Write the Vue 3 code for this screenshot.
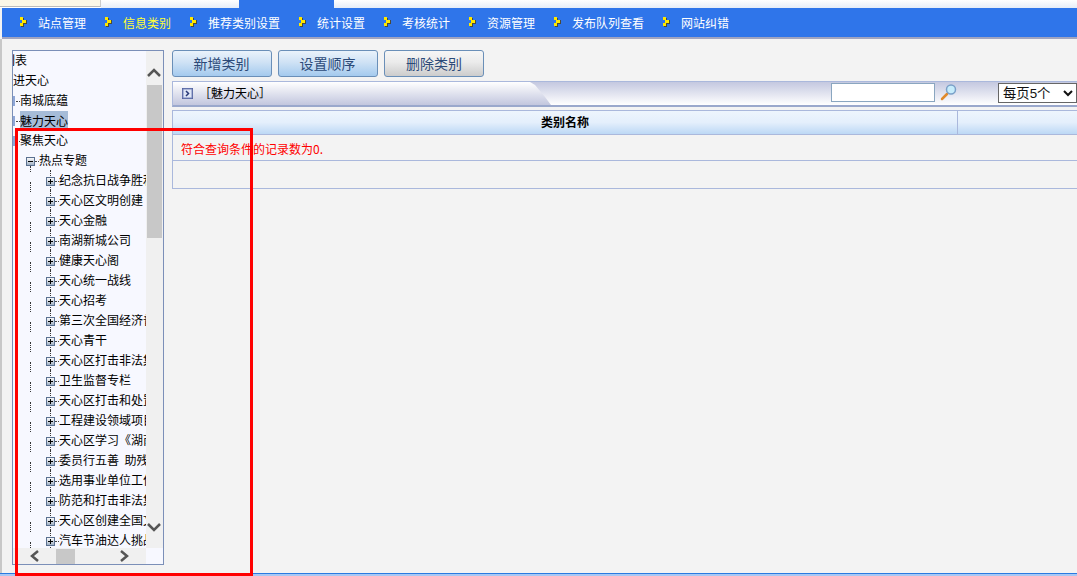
<script setup>
const navItems = ['站点管理', '信息类别', '推荐类别设置', '统计设置', '考核统计', '资源管理', '发布队列查看', '网站纠错']
const roots = [
  { text: '列表', cls: 'lv0 first' },
  { text: '推进天心', cls: 'lv0 second' },
  { text: '南城底蕴', cls: 'lv1' },
  { text: '魅力天心', cls: 'lv1 sel' },
  { text: '聚焦天心', cls: 'lv1' },
]
const children = ['纪念抗日战争胜利70周年', '天心区文明创建', '天心金融', '南湖新城公司', '健康天心阁', '天心统一战线', '天心招考', '第三次全国经济普查', '天心青干', '天心区打击非法集资', '卫生监督专栏', '天心区打击和处置非法', '工程建设领域项目', '天心区学习《湖南日报》', '委员行五善  助残', '选用事业单位工作人员', '防范和打击非法集资', '天心区创建全国文明', '汽车节油达人挑战']
</script>

<template>
  <div class="page">
    <div class="topband">
      <div class="cream"></div>
      <div class="pale"></div>
      <div class="tabblue"></div>
      <div class="pale grow"></div>
    </div>
    <nav class="nav">
      <div v-for="(n, i) in navItems" :key="n" class="navitem" :class="{ on: i === 1 }">
        <svg width="8" height="10" viewBox="0 0 8 10"><path d="M1 1h3v2h3v4H4v3H1V7h2V3H1z" fill="#4a4a3a"/><path d="M0 0h3v3h3v3H3v3H0V6h2V3H0z" fill="#ffe800"/></svg>
        <span>{{ n }}</span>
      </div>
    </nav>
    <div class="body">
      <aside class="panel">
        <div class="panel-main">
          <div class="tree">
            <div v-for="r in roots" :key="r.text" class="row" :class="r.cls">
              <i class="stub"></i><span class="label">{{ r.text }}</span>
            </div>
            <div class="row lv2">
              <i class="box minus"></i><i class="dots"></i><span class="label">热点专题</span>
            </div>
            <div v-for="c in children" :key="c" class="row lv3">
              <i class="guide"></i><i class="vline"></i>
              <i class="box plus"></i><i class="dots"></i><span class="label">{{ c }}</span>
            </div>
          </div>
          <div class="vscroll">
            <svg class="chev-up" width="14" height="9" viewBox="0 0 14 9"><path d="M1 8l6-6 6 6" fill="none" stroke="#555" stroke-width="2.500"/></svg>
            <div class="vthumb"></div>
            <div class="grow"></div>
            <svg class="chev-down" width="14" height="9" viewBox="0 0 14 9"><path d="M1 1l6 6 6-6" fill="none" stroke="#555" stroke-width="2.500"/></svg>
          </div>
        </div>
        <div class="hscroll">
          <svg width="9" height="12" viewBox="0 0 9 12"><path d="M8 1L2 6l6 5" fill="none" stroke="#555" stroke-width="2.500"/></svg>
          <div class="hthumb"></div>
          <svg class="hright" width="9" height="12" viewBox="0 0 9 12"><path d="M1 1l6 5-6 5" fill="none" stroke="#555" stroke-width="2.500"/></svg>
        </div>
      </aside>
      <main class="main">
        <div class="toolbar">
          <button class="btn">新增类别</button>
          <button class="btn">设置顺序</button>
          <button class="btn gray">删除类别</button>
        </div>
        <div class="titlebar">
          <div class="tab">
            <svg width="11" height="11" viewBox="0 0 11 11"><rect x=".5" y=".5" width="10" height="10" fill="#dfe6f6" stroke="#4a5a98"/><rect x="1" y="1" width="9" height="9" fill="none" stroke="#7a88bc"/><path d="M4 3l2.500 2.500L4 8" fill="none" stroke="#2a3a78" stroke-width="1.500"/></svg>
            <span class="title">［魅力天心］</span>
          </div>
          <div class="tools">
            <input class="search" type="text" />
            <svg class="lens" width="18" height="18" viewBox="0 0 18 18"><path d="M2 16l5-5" stroke="#e08a2c" stroke-width="2.500" stroke-linecap="round"/><circle cx="11" cy="6.500" r="4.500" fill="#c6ecfb" stroke="#7aa0c8" stroke-width="1.500"/></svg>
            <select class="pagesize"><option>每页5个</option></select>
          </div>
        </div>
        <div class="thead">
          <div class="th">类别名称</div>
          <div class="th"></div>
        </div>
        <div class="msg">符合查询条件的记录数为0.</div>
        <div class="empty"></div>
      </main>
    </div>
    <div class="bottomline"></div>
    <div class="annotation"></div>
  </div>
</template>

<style>
html, body { margin: 0; background: #f3f3f3; overflow: hidden; }
</style>

<style scoped>
.page {
  position: relative;
  width: 1077px;
  height: 576px;
  overflow: hidden;
  display: flex;
  flex-direction: column;
  background: #f3f3f3;
  font: 12px "Noto Sans CJK SC", "Liberation Sans", sans-serif;
  color: #000;
  box-sizing: border-box;
}
.topband { height: 8px; display: flex; flex: none; background: #fff; }
.cream { width: 101px; height: 7px; background: #fbf7e8; border-right: 1px solid #ccc; border-bottom: 1px solid #bbb; box-sizing: border-box; }
.pale { width: 138px; background: linear-gradient(#ffffff, #e6edf8); }
.tabblue { width: 95px; background: #2f75ea; }
.grow { flex: 1; }
.nav {
  flex: none;
  height: 29px;
  margin-left: 2px;
  padding-left: 18px;
  background: #2f75ea;
  border-bottom: 2px solid #a0a4c0;
  display: flex;
  align-items: center;
  gap: 19px;
  color: #fff;
}
.navitem { display: flex; align-items: center; gap: 10px; line-height: 26px; }
.navitem.on { color: #ffff33; }
.navitem svg { margin-top: -1px; }
.body {
  flex: 1;
  min-height: 0;
  display: flex;
  gap: 8px;
  padding: 11px 0 8px 10px;
  border-left: 2px solid #c8c8c8;
  box-sizing: border-box;
}
.panel {
  width: 152px;
  flex: none;
  height: 515px;
  box-sizing: border-box;
  border: 1px solid #7b8fb8;
  background: #f7f8ff;
  display: flex;
  flex-direction: column;
}
.panel-main { flex: 1; min-height: 0; display: flex; }
.tree { width: 133px; flex: none; overflow: hidden; margin-top: -1px; }
.row {
  position: relative;
  height: 20px;
  display: flex;
  align-items: center;
  white-space: pre;
  line-height: 18px;
}
.stub { position: absolute; left: 0; top: 6px; width: 2px; height: 10px; background: #8ea6d6; }
.lv0 .stub { display: none; }
.first .label { margin-left: -10px; }
.second .label { margin-left: -12px; }
.lv1 { padding-left: 7px; }
.lv1::before { content: ""; position: absolute; left: 3px; top: 11px; width: 4px; border-top: 1px dotted #444; }
.sel .label { background: #a6bcd8; line-height: 19px; }
.lv2 { padding-left: 13px; }
.lv3 { padding-left: 33px; }
.box {
  width: 9px;
  height: 9px;
  flex: none;
  box-sizing: border-box;
  border: 1px solid #5a7090;
  background: linear-gradient(#fafafa, #a0b0c4);
  position: relative;
  margin-top: 2px;
}
.box::before { content: ""; position: absolute; left: 1px; right: 1px; top: 3px; height: 1px; background: #000; }
.plus::after { content: ""; position: absolute; top: 1px; bottom: 1px; left: 3px; width: 1px; background: #000; }
.dots { width: 4px; flex: none; border-top: 1px dotted #444; margin-top: 2px; }
.guide { position: absolute; left: 17px; top: 12px; height: 10px; border-left: 1px dotted #333; }
.vline { position: absolute; left: 37px; top: 0; height: 100%; border-left: 1px dotted #333; }
.lv3 .box { z-index: 1; }
.lv2::after { content: ""; position: absolute; left: 17px; top: 16px; height: 6px; border-left: 1px dotted #333; }
.vscroll {
  width: 17px;
  flex: none;
  background: #f0f0f0;
  display: flex;
  flex-direction: column;
  align-items: flex-start;
}
.chev-up { margin: 17px 0 0 1px; flex: none; }
.vthumb { width: 15px; height: 153px; background: #c8c8c8; margin: 8px 0 0 1px; flex: none; }
.chev-down { margin: 0 0 16px 1px; flex: none; }
.hscroll {
  height: 16px;
  flex: none;
  background: #f0f0f0;
  display: flex;
  align-items: center;
  padding-left: 17px;
  margin-right: 17px;
}
.hthumb { width: 19px; height: 15px; background: #c8c8c8; margin-left: 17px; }
.hright { margin-left: 45px; }
.main { width: 930px; flex: none; display: flex; flex-direction: column; }
.toolbar { display: flex; gap: 6px; height: 27px; flex: none; }
.btn {
  width: 100px;
  height: 27px;
  padding: 0 1px 2px 0;
  border: 1px solid #6a8fb8;
  border-radius: 3px;
  background: linear-gradient(#eaf3fb 0%, #cfe2f5 45%, #a4caee 100%);
  color: #2c4a78;
  font: 14px "Noto Sans CJK SC", "Liberation Sans", sans-serif;
}
.btn.gray { background: linear-gradient(#f6f6f6 0%, #ebebeb 45%, #cccccc 100%); padding-right: 0; }
.titlebar {
  position: relative;
  margin-top: 4px;
  height: 26px;
  flex: none;
  box-sizing: border-box;
  border-top: 1px solid #aab8dc;
  border-bottom: 2px solid #9aa8cc;
  border-left: 1px solid #aab8dc;
  background: linear-gradient(#c4c8e0, #ffffff);
}
.tab {
  position: absolute;
  left: 0;
  top: 0;
  bottom: 0;
  width: 378px;
  background: linear-gradient(#ffffff, #c2c6de);
  display: flex;
  align-items: center;
  padding-left: 9px;
  box-sizing: border-box;
  clip-path: polygon(0 0, 357px 0, 362px 3px, 372px 15px, 378px 23px, 0 23px);
}
.title { margin-left: 6px; padding-bottom: 3px; }
.tools {
  position: absolute;
  left: 658px;
  top: 1px;
  display: flex;
  align-items: flex-start;
}
.search {
  width: 104px;
  height: 19px;
  box-sizing: border-box;
  border: 1px solid #8aa6c0;
  background: #fff;
  padding: 0;
  outline: none;
}
.lens { margin-left: 5px; }
.pagesize {
  margin-left: 40px;
  width: 79px;
  height: 20px;
  box-sizing: border-box;
  background: #fff;
  border: 1px solid #666;
  font: 13.33px "Liberation Sans", "Noto Sans CJK SC", sans-serif;
  padding: 0;
  border-radius: 0;
  color: #111;
}
.thead {
  margin-top: 3px;
  height: 25px;
  flex: none;
  box-sizing: border-box;
  display: grid;
  grid-template-columns: 785px 1fr;
  border: 1px solid #aab8dc;
  background: linear-gradient(#eef5fd 0%, #e4effc 50%, #bcd8f5 100%);
}
.th {
  text-align: center;
  font-weight: 700;
  line-height: 21px;
  border-right: 1px solid #aab8dc;
}
.msg {
  height: 26px;
  flex: none;
  box-sizing: border-box;
  line-height: 28px;
  padding-left: 8px;
  color: #f00;
  border-left: 1px solid #aab8dc;
  border-bottom: 1px solid #aab8dc;
}
.empty {
  height: 28px;
  flex: none;
  box-sizing: border-box;
  border-left: 1px solid #aab8dc;
  border-bottom: 1px solid #aab8dc;
}
.bottomline { position: absolute; left: 0; right: 0; bottom: 0; height: 2px; border-top: 1px solid #2a7ae0; background: #a8c8f5; }
.annotation {
  position: absolute;
  left: 15px;
  top: 128px;
  width: 238px;
  height: 448px;
  box-sizing: border-box;
  border: 3px solid #f00;
  pointer-events: none;
}
</style>
